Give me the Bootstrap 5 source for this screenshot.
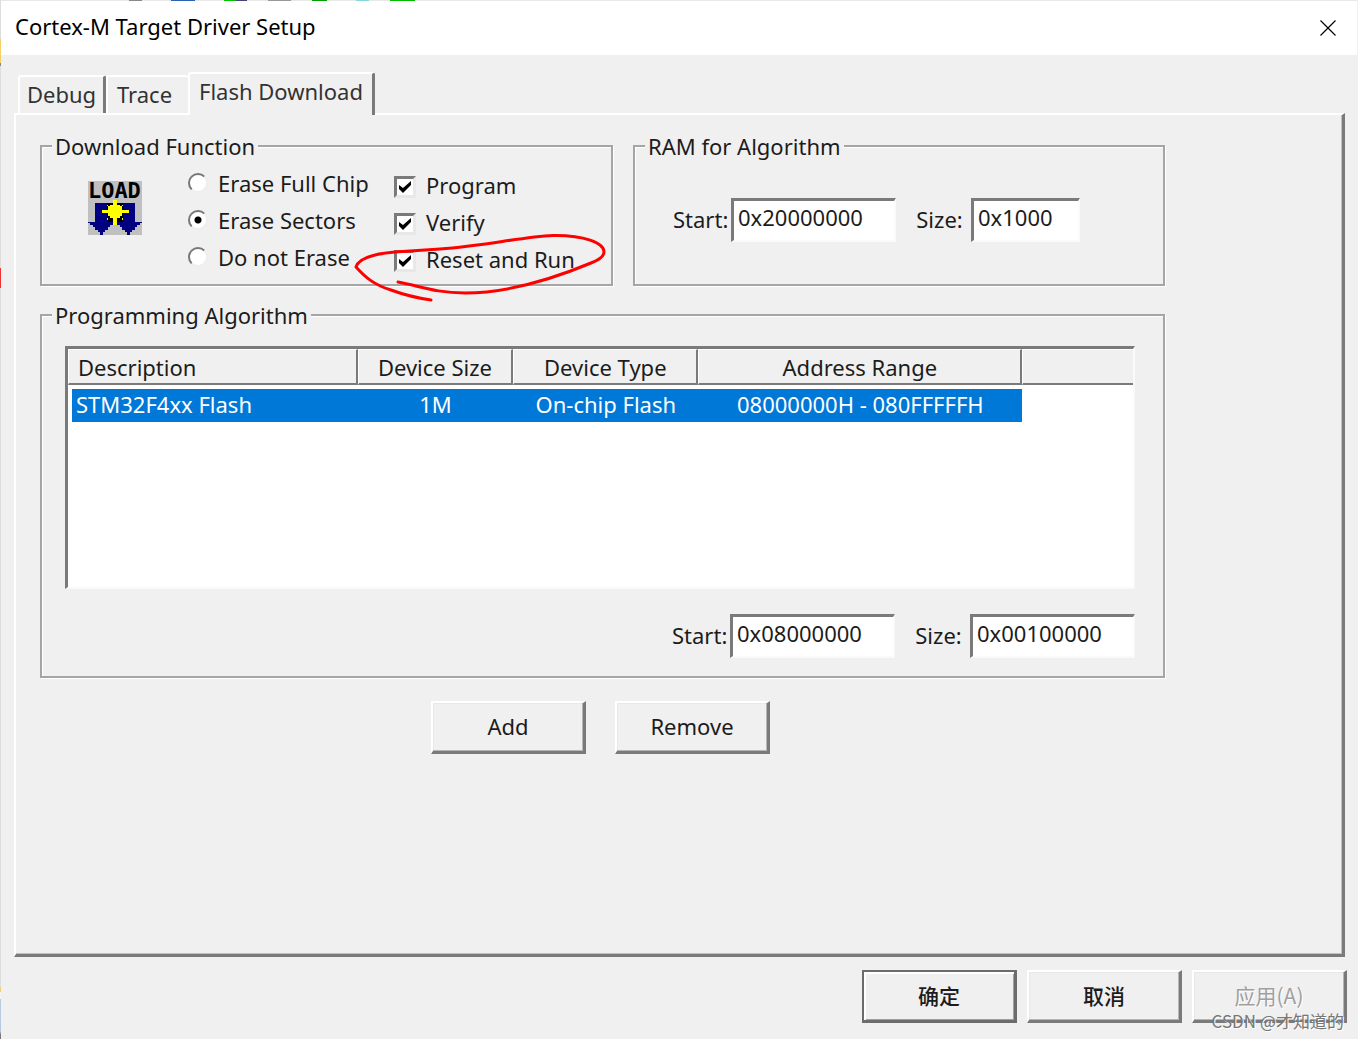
<!DOCTYPE html>
<html lang="zh-CN">
<head>
<meta charset="utf-8">
<meta name="viewport" content="width=device-width, initial-scale=1">
<title>Cortex-M Target Driver Setup</title>
<link href="https://cdn.jsdelivr.net/npm/bootstrap@5.3.0/dist/css/bootstrap.min.css" rel="stylesheet">
<style>
  :root { --face: #f0f0f0; --edge: #a5a5a5; --dark: #7a7a7a; --mid: #a0a0a0; --light: #e3e3e3; }
  body { font-family: "Noto Sans", "Noto Sans CJK SC", sans-serif; font-size: 22px; line-height: 30px; color: #1c1c1c; background: var(--face); }
  .dialog {
    min-height: 100vh; border-left: 1px solid; border-right: 1px solid #e4e4e4;
    border-image: linear-gradient(#ddd 0 40px, #f5cf6a 40px 64px, #888 64px 67px, #ddd 67px 268px, #e33 268px 288px, #ddd 288px 986px, #f5cf6a 986px 991px, #f4f4f4 991px 998px, #b9c9e2 998px 1030px, #777 1034px) 1;
    border-image-width: 0 0 0 1px;
  }
  .title-bar { height: 55px; padding: 0 18px 0 14px; color: #000; background-color: #fff; border-top: 1px solid #e8e8e8; position: relative; }
  .title-bar::before {
    content: ""; position: absolute; left: 0; right: 0; top: -1px; height: 1px;
    background: linear-gradient(90deg, transparent 128px, #888 128px 141px, transparent 141px 170px, #2b62b5 170px 194px, transparent 194px 223px, #00c000 223px 235px, #447 235px 246px, transparent 246px 267px, #999 267px 290px, transparent 290px 311px, #00a000 311px 326px, transparent 326px 355px, #8cd4dc 355px 368px, transparent 368px 389px, #0b0 389px 414px, transparent 414px);
  }
  .title-bar h1 { font-size: 22px; line-height: 30px; font-weight: 400; padding-bottom: 4px; }
  .close-button { width: 22px; height: 22px; padding: 3px; border: 0; background: none; display: flex; }
  .dialog-body { padding: 17px 12px 0 13px; }
  .tab-strip { padding-left: 4px; height: 41px; align-items: flex-end; }
  .tab-strip .nav-link {
    height: 38px; padding: 2px 5px 4px; color: #333; border: 0; border-radius: 3px 3px 0 0; background: var(--face);
    border-top: 2px solid #fff; border-left: 2px solid #fff; text-align: center;
  }
  .tab-strip .tab-debug { width: 88px; border-right: 3px solid var(--dark); }
  .tab-strip .tab-trace { width: 82px; padding-right: 12px; }
  .tab-strip .nav-link.active { width: 187px; height: 43px; margin-bottom: -2px; border-right: 3px solid var(--dark); z-index: 1; position: relative; }
  .tab-page {
    min-height: 844px; padding: 17px 24px; border: solid; border-width: 2px 3px 3px 2px;
    border-color: #fff var(--dark) var(--dark) #fff; box-shadow: inset -1px -1px #c0c0c0;
  }
  .groups { max-width: 1125px; display: grid; grid-template-columns: 573fr 532fr; column-gap: 20px; row-gap: 15px; }
  .group-box { min-width: 0; border: 2px solid var(--edge); box-shadow: inset 1px 1px #fff, 1px 1px #fff; }
  .group-box legend { float: none; width: auto; margin: 0 0 0 10px; padding: 0 3px; font-size: 22px; line-height: 28px; background: var(--face); }
  .span-all { grid-column: 1 / -1; }
  .function-row { padding: 6px 0 5px 46px; }
  .load-icon { width: 54px; height: 54px; margin: 15px 46px 0 0; flex: none; overflow: visible; }
  .radio-column { width: 206px; }
  .check-column { padding-top: 2px; }
  .choice { height: 37px; display: flex; align-items: center; gap: 10px; white-space: nowrap; position: relative; }
  .choice label { padding-bottom: 4px; }
  .choice .form-check-input { margin: 0; flex: none; box-shadow: none; background-color: #fff; }
  .choice .form-check-input[type=radio] { width: 20px; height: 20px; border: 2px solid; border-color: #777 #eee #eee #777; margin-bottom: 4px; }
  .choice .form-check-input[type=radio]:checked { background-image: radial-gradient(circle, #000 3px, #fff 4px); }
  .choice .form-check-input[type=checkbox] { width: 22px; height: 22px; border: 3px solid; border-color: #7a7a7a #e8e8e8 #e8e8e8 #7a7a7a; border-radius: 0; }
  .choice .form-check-input[type=checkbox]:checked { background-size: 100% 100%; background-image: url("data:image/svg+xml,%3Csvg xmlns='http://www.w3.org/2000/svg' viewBox='0 0 16 16'%3E%3Cpath d='M2 6v4l4 4 8-8V2L6 9z' fill='%23000'/%3E%3C/svg%3E"); }
  .ink { position: absolute; left: -44px; top: -12px; width: 262px; height: 76px; pointer-events: none; z-index: 2; }
  .field { display: flex; align-items: center; gap: 5px; }
  .field label { width: 53px; padding-bottom: 3px; text-align: center; white-space: nowrap; }
  .field .form-control {
    width: 165px; height: 44px; padding: 0 4px 8px; font-size: 22px; line-height: 30px; color: #1c1c1c; background: #fff; border-radius: 0;
    border: solid; border-width: 3px 2px 2px 3px; border-color: #7a7a7a #fafafa #fafafa #7a7a7a;
  }
  .field .short-field { width: 109px; }
  .ram-row { padding: 38px 0 40px 38px; gap: 17px; }
  .algorithm-body { padding: 17px 28px 18px 23px; }
  .algorithm-list { height: 243px; background: #fff; border: solid; border-width: 3px 2px 2px 3px; border-color: #7a7a7a #fafafa #fafafa #7a7a7a; }
  .algorithm-list table { width: 100%; table-layout: fixed; border-collapse: separate; border-spacing: 0; white-space: nowrap; text-align: center; }
  .algorithm-list th { height: 36px; padding: 0; font-weight: 400; background: var(--face); border: solid; border-width: 1px 2px 2px 1px; border-color: #fff var(--dark) var(--dark) #fff; }
  .algorithm-list th:last-child { border-right: 0; }
  .algorithm-list th:first-child { padding-left: 9px; text-align: left; }
  .algorithm-list td { height: 36px; padding: 0 0 3px; color: #fff; background: #0078d7; border-top: 4px solid #fff; }
  .algorithm-list td:first-child { text-align: left; border-left: 4px solid #fff; padding-left: 4px; }
  .algorithm-list td:last-child { background: #fff; }
  .range-row { padding-top: 25px; gap: 17px; }
  .push-button {
    width: 155px; height: 53px; padding: 0 0 3px; font-size: 22px; line-height: 30px; color: #1c1c1c; border-radius: 0; background: var(--face);
    border: solid; border-width: 2px 3px 3px 2px; border-color: #fff var(--dark) var(--dark) #fff; box-shadow: inset -1px -1px #b5b5b5, inset 1px 1px #e8e8e8;
  }
  .push-button.default-button { border-color: #6c6c6c; box-shadow: inset 2px 2px #fff, inset -1px -1px #a0a0a0; }
  .push-button:disabled { color: #a0a0a0; opacity: 1; background: var(--face); border-color: #fff var(--dark) var(--dark) #fff; text-shadow: 1px 1px #fff; }
  .list-actions { padding: 23px 0 0 391px; gap: 29px; }
  .cjk-text { font-family: "Noto Sans CJK SC", sans-serif; font-size: 21px; font-weight: 500; }
  .push-button.cjk-text:disabled { font-weight: 400; }
  .dialog-footer { margin-right: -2px; padding: 13px 0 16px; gap: 10px; position: relative; }
  .watermark { position: absolute; right: 3px; bottom: 6px; font: 17px/24px "Noto Sans CJK SC", sans-serif; color: #777; text-shadow: 1px 1px #fff; white-space: nowrap; pointer-events: none; }
</style>
</head>
<body>
<main class="dialog">
  <header class="title-bar d-flex align-items-center justify-content-between">
    <h1 class="m-0">Cortex-M Target Driver Setup</h1>
    <button class="close-button" type="button" aria-label="Close"><svg viewBox="0 0 16 16" width="16" height="16" stroke="#000" stroke-width="1.2"><path d="M.5.5l15 15M15.500.5l-15 15"/></svg></button>
  </header>
  <div class="dialog-body">
    <nav class="tab-strip nav flex-nowrap">
      <a class="nav-link tab-debug" href="#">Debug</a>
      <a class="nav-link tab-trace" href="#">Trace</a>
      <a class="nav-link active" href="#" aria-current="page">Flash Download</a>
    </nav>
    <section class="tab-page">
      <div class="groups">
        <fieldset class="group-box">
          <legend>Download Function</legend>
          <div class="function-row d-flex">
            <svg class="load-icon" viewBox="0 0 32 32">
              <path fill="#c0c0c0" d="M0 0h32v32H0z"/>
              <text x="0" y="10" font-family="DejaVu Sans Mono, monospace" font-weight="700" font-size="13">LOAD</text>
              <g shape-rendering="crispEdges">
                <path fill="#000080" d="M4 13h24v11h4v1h-1v1h-2v1h-1v2h-2v1h-1v2h-2v-2h-1v-1h-2v-2h-1v-1h-2v-2h-2v2h-2v1h-1v2h-2v1H9v2H7v-2H6v-1H4v-2H3v-1H1v-1H0v-1h4z"/>
                <path fill="#000" d="M11 13h10v11H11z"/>
                <path fill="#ff0" d="M15 11h2v3h2v1h1v2h4v2h-4v2h-1v1h-2v4h-2v-4h-2v-1h-1v-2H8v-2h4v-2h1v-1h2zM11 14h1v1h-1zM20 14h1v1h-1zM11 22h1v1h-1zM20 22h1v1h-1z"/>
              </g>
            </svg>
            <div class="radio-column">
              <div class="choice"><input class="form-check-input" type="radio" name="erase" id="eraseChip"><label for="eraseChip">Erase Full Chip</label></div>
              <div class="choice"><input class="form-check-input" type="radio" name="erase" id="eraseSectors" checked><label for="eraseSectors">Erase Sectors</label></div>
              <div class="choice"><input class="form-check-input" type="radio" name="erase" id="eraseNone"><label for="eraseNone">Do not Erase</label></div>
            </div>
            <div class="check-column">
              <div class="choice"><input class="form-check-input" type="checkbox" id="program" checked><label for="program">Program</label></div>
              <div class="choice"><input class="form-check-input" type="checkbox" id="verify" checked><label for="verify">Verify</label></div>
              <div class="choice"><input class="form-check-input" type="checkbox" id="resetRun" checked><label for="resetRun">Reset and Run</label>
                <svg class="ink" viewBox="350 230 262 76" fill="none" stroke="#f00" stroke-width="3" stroke-linecap="round" stroke-linejoin="round" aria-hidden="true"><path d="M398 282C420 286 435 293 465 293C510 293 555 278 591 263Q604 258 604 252C604 243 584 235 553 235.500C520 237 485 246 440 249L395 252C370 254 358 260 356 267C365 277 374 285 391 290Q410 297 431 300"/></svg>
              </div>
            </div>
          </div>
        </fieldset>
        <fieldset class="group-box">
          <legend>RAM for Algorithm</legend>
          <div class="ram-row d-flex">
            <div class="field"><label for="ramStart">Start:</label><input class="form-control" id="ramStart" type="text" value="0x20000000"></div>
            <div class="field"><label for="ramSize">Size:</label><input class="form-control short-field" id="ramSize" type="text" value="0x1000"></div>
          </div>
        </fieldset>
        <fieldset class="group-box span-all">
          <legend>Programming Algorithm</legend>
          <div class="algorithm-body">
            <div class="algorithm-list">
              <table>
                <colgroup><col style="width:27.2%"><col style="width:14.6%"><col style="width:17.4%"><col style="width:30.4%"><col></colgroup>
                <thead><tr><th scope="col">Description</th><th scope="col">Device Size</th><th scope="col">Device Type</th><th scope="col">Address Range</th><th></th></tr></thead>
                <tbody><tr><td>STM32F4xx Flash</td><td>1M</td><td>On-chip Flash</td><td>08000000H - 080FFFFFH</td><td></td></tr></tbody>
              </table>
            </div>
            <div class="range-row d-flex justify-content-end">
              <div class="field"><label for="flashStart">Start:</label><input class="form-control" id="flashStart" type="text" value="0x08000000"></div>
              <div class="field"><label for="flashSize">Size:</label><input class="form-control" id="flashSize" type="text" value="0x00100000"></div>
            </div>
          </div>
        </fieldset>
      </div>
      <div class="list-actions d-flex">
        <button class="btn push-button" type="button">Add</button>
        <button class="btn push-button" type="button">Remove</button>
      </div>
    </section>
    <footer class="dialog-footer d-flex justify-content-end">
      <button class="btn push-button default-button cjk-text" type="button">确定</button>
      <button class="btn push-button cjk-text" type="button">取消</button>
      <button class="btn push-button cjk-text" type="button" disabled>应用(A)</button>
      <span class="watermark">CSDN @才知道的</span>
    </footer>
  </div>
</main>
<script src="https://cdn.jsdelivr.net/npm/bootstrap@5.3.0/dist/js/bootstrap.bundle.min.js"></script>
</body>
</html>
